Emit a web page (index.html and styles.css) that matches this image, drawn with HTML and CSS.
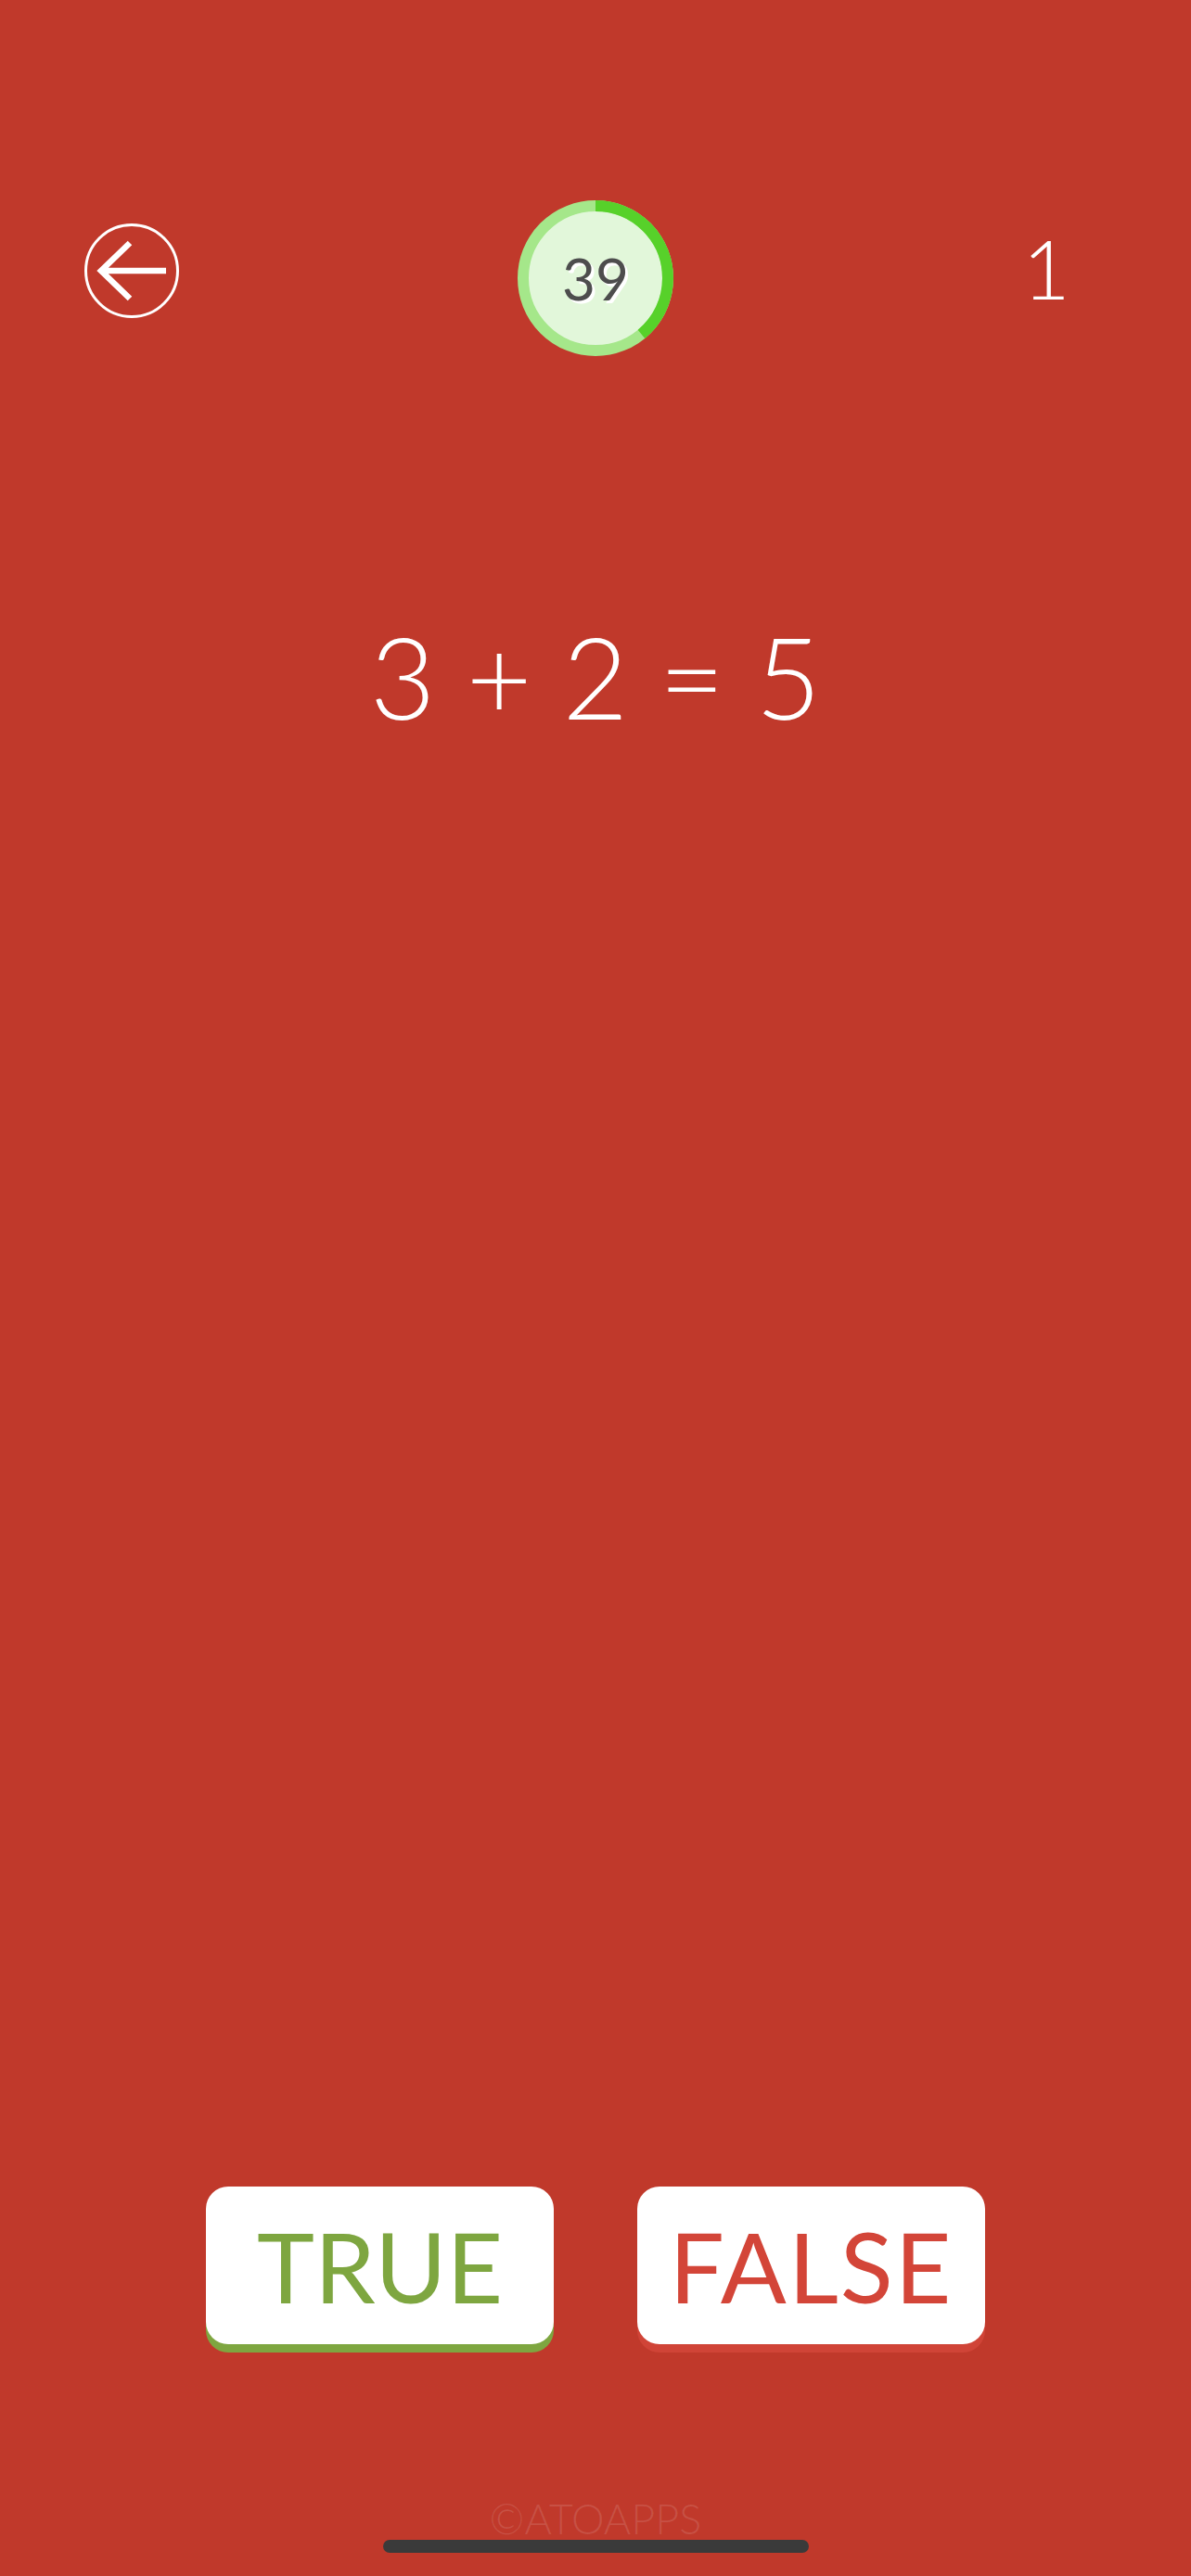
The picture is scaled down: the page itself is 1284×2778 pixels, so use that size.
FILE: index.html
```html
<!DOCTYPE html>
<html lang="en">
<head>
<meta charset="utf-8">
<title>True or False</title>
<link rel="stylesheet" href="styles.css">
</head>
<body>
<div class="screen">
  <header class="top">
    <div class="back">
      <svg width="104" height="104" viewBox="0 0 104 104">
        <circle cx="52" cy="52" r="49.5" fill="none" stroke="#fff" stroke-width="3"/>
        <path d="M50 22 L19 52 L50 82 M19 52 L89 52" fill="none" stroke="#fff" stroke-width="6.5" stroke-linejoin="miter"/>
      </svg>
    </div>
    <div class="timer">
      <svg class="ring" width="168" height="168" viewBox="0 0 168 168">
        <circle cx="84" cy="84" r="73" fill="#e2f7da"/>
        <circle cx="84" cy="84" r="78" fill="none" stroke="#a5e78a" stroke-width="12"/>
        <circle cx="84" cy="84" r="78" fill="none" stroke="#57d12a" stroke-width="12" stroke-dasharray="191.1 490.1" transform="rotate(-90 84 84)"/>
      </svg>
      <span class="time">39</span>
    </div>
    <div class="score">1</div>
  </header>
  <main class="question">3 + 2 = 5</main>
  <div class="answers">
    <button class="answer answer-true">TRUE</button>
    <button class="answer answer-false">FALSE</button>
  </div>
  <footer class="footer">
    <div class="copy">©ATOAPPS</div>
    <div class="home-bar"></div>
  </footer>
</div>
</body>
</html>
```
FILE: styles.css
```css
html, body {
  margin: 0;
  padding: 0;
  background: #c0392b;
}
.screen {
  width: 1284px;
  height: 2778px;
  background: #c0392b;
  display: flex;
  flex-direction: column;
  font-family: Lato, "Noto Sans", sans-serif;
  color: #fff;
  overflow: hidden;
}
.top {
  margin-top: 216px;
  height: 168px;
  display: grid;
  grid-template-columns: 1fr 168px 1fr;
  align-items: start;
}
.back {
  justify-self: start;
  margin-left: 90px;
  margin-top: 24px;
  width: 104px;
  height: 104px;
}
.back svg { display: block; }
.timer {
  position: relative;
  width: 168px;
  height: 168px;
}
.ring {
  display: block;
}
.time {
  position: absolute;
  inset: 0;
  display: flex;
  align-items: center;
  justify-content: center;
  font-size: 62px;
  font-weight: 400;
  color: #4d4d4d;
  text-shadow: 3px 3px 0 #fff;
  line-height: 1;
}
.score {
  justify-self: end;
  width: 100px;
  margin-right: 106px;
  margin-top: 28px;
  text-align: center;
  font-size: 89px;
  font-weight: 300;
  line-height: 1;
}
.question {
  margin-top: 284px;
  text-align: center;
  font-size: 122px;
  font-weight: 300;
  line-height: 1;
}
.answers {
  margin-top: auto;
  display: flex;
  justify-content: center;
  gap: 90px;
}
.answer {
  width: 375px;
  height: 170px;
  border: none;
  border-radius: 24px;
  background: #fff;
  font-family: Lato, "Noto Sans", sans-serif;
  font-size: 105px;
  font-weight: 400;
  line-height: 1;
  padding: 0;
  cursor: pointer;
}
.answer-true {
  color: #7ea640;
  box-shadow: 0 9px 0 #7ea640;
}
.answer-false {
  color: #d34538;
  letter-spacing: 2px;
  box-shadow: 0 9px 0 #d04437;
}
.footer {
  margin-top: 166px;
  display: flex;
  flex-direction: column;
  align-items: center;
  padding-bottom: 25px;
}
.copy {
  font-size: 45px;
  font-weight: 300;
  line-height: 1;
  color: rgba(255, 255, 255, 0.12);
}
.home-bar {
  width: 459px;
  height: 14px;
  border-radius: 7px;
  background: #3a3a3a;
}
```
